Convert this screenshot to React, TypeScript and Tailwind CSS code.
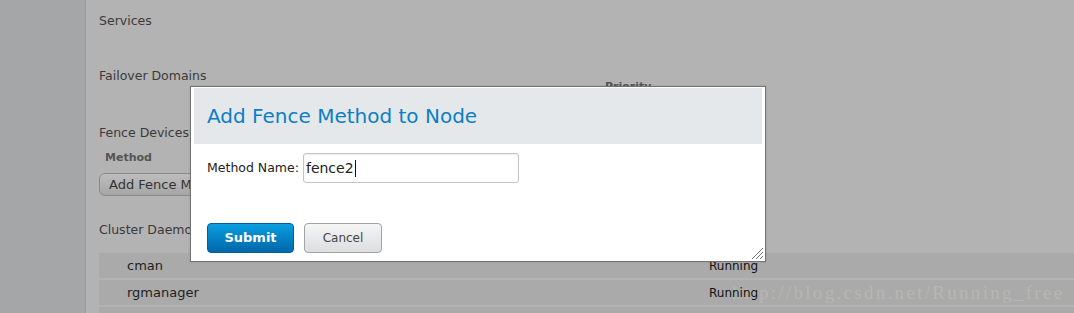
const font = "font-['DejaVu_Sans',sans-serif]";

function DaemonRow({ name, status }: { name: string; status: string }) {
  return (
    <div className="flex h-[25px] items-center bg-[#aaaaaa] text-[13px] text-[#1e1e1e]">
      <span className="w-[610px] pl-[28px]">{name}</span>
      <span className="relative z-10 text-[12px] text-[#111]">{status}</span>
    </div>
  );
}

function ResizeGrip() {
  return (
    <svg width="14" height="14" viewBox="0 0 14 14" className="absolute bottom-[1px] right-[1px]">
      <line x1="2" y1="13" x2="13" y2="2" stroke="#7a7a7a" strokeWidth="1" />
      <line x1="6" y1="13" x2="13" y2="6" stroke="#7a7a7a" strokeWidth="1" />
      <line x1="10" y1="13" x2="13" y2="10" stroke="#7a7a7a" strokeWidth="1" />
    </svg>
  );
}

export default function App() {
  return (
    <div className={`${font} relative flex h-[313px] w-[1074px] overflow-hidden bg-[#b3b3b3] text-[#3a3a3a]`}>
      {/* sidebar */}
      <div className="w-[86px] shrink-0 border-r border-[#9b9b9b] bg-[#a5a6a8]" />

      {/* main content */}
      <div className="flex-1 pl-[13px]">
        <div className="mt-[13px] h-[15px] text-[12.5px] leading-[15px]">Services</div>
        <div className="mt-[40px] h-[15px] text-[12.5px] leading-[15px]">Failover Domains</div>
        <div className="-mt-[4px] h-[15px] pl-[506px] text-[11px] font-bold leading-[15px] text-[#555]">Priority</div>
        <div className="mt-[31px] h-[15px] text-[12.5px] leading-[15px]">Fence Devices</div>
        <div className="mt-[11px] h-[14px] pl-[6px] text-[11px] font-bold leading-[14px] text-[#555]">Method</div>
        <button className="mt-[8px] flex h-[23px] items-center rounded-[6px] border border-[#8a8a8a] bg-gradient-to-b from-[#bdbdbd] to-[#a6a6a6] pl-[9px] pr-[12px] text-[13px] text-[#333]">
          Add Fence Method
        </button>
        <div className="mt-[26px] h-[15px] text-[12.5px] leading-[15px]">Cluster Daemons</div>
        <div className="mt-[16px] flex flex-col gap-[2px]">
          <DaemonRow name="cman" status="Running" />
          <DaemonRow name="rgmanager" status="Running" />
          <div className="h-[25px] bg-[#aaaaaa]" />
        </div>
      </div>

      {/* watermark */}
      <div className="pointer-events-none absolute left-[732px] top-[279px] font-['Liberation_Serif',serif] text-[19px] tracking-[2.3px] text-[#b7b7b0]">
        http://blog.csdn.net/Running_free
      </div>

      {/* dialog */}
      <div className="absolute left-[190px] top-[86px] z-20 h-[176px] w-[576px] border border-[#737373] bg-white px-[3px] pt-[1px] shadow-[0_0_2px_rgba(0,0,0,0.15)]">
        <div className="flex h-[56px] items-center bg-[#e4e8eb] pl-[13px] text-[20px] text-[#0b7fc1]">
          Add Fence Method to Node
        </div>
        <div className="mt-[9px] flex items-center pl-[13px]">
          <span className="text-[12.5px] text-[#222]">Method Name:</span>
          <div className="ml-[4px] flex h-[30px] w-[216px] items-center rounded-[3px] border border-[#c4c4c4] pl-[2px] text-[14px] text-[#222] shadow-[inset_0_1px_2px_rgba(0,0,0,0.08)]">
            fence2
            <span className="ml-[1px] inline-block h-[17px] w-[1px] bg-[#111]" />
          </div>
        </div>
        <div className="mt-[40px] flex gap-[10px] pl-[13px]">
          <button className="flex h-[30px] w-[87px] items-center justify-center rounded-[4px] border border-[#00609c] bg-gradient-to-b from-[#0c9fe0] to-[#0067aa] text-[13px] font-bold text-white">
            Submit
          </button>
          <button className="flex h-[30px] w-[78px] items-center justify-center rounded-[4px] border border-[#a3a3a3] bg-gradient-to-b from-[#f5f5f5] to-[#dcdee1] text-[12px] text-[#444]">
            Cancel
          </button>
        </div>
        <ResizeGrip />
      </div>
    </div>
  );
}
